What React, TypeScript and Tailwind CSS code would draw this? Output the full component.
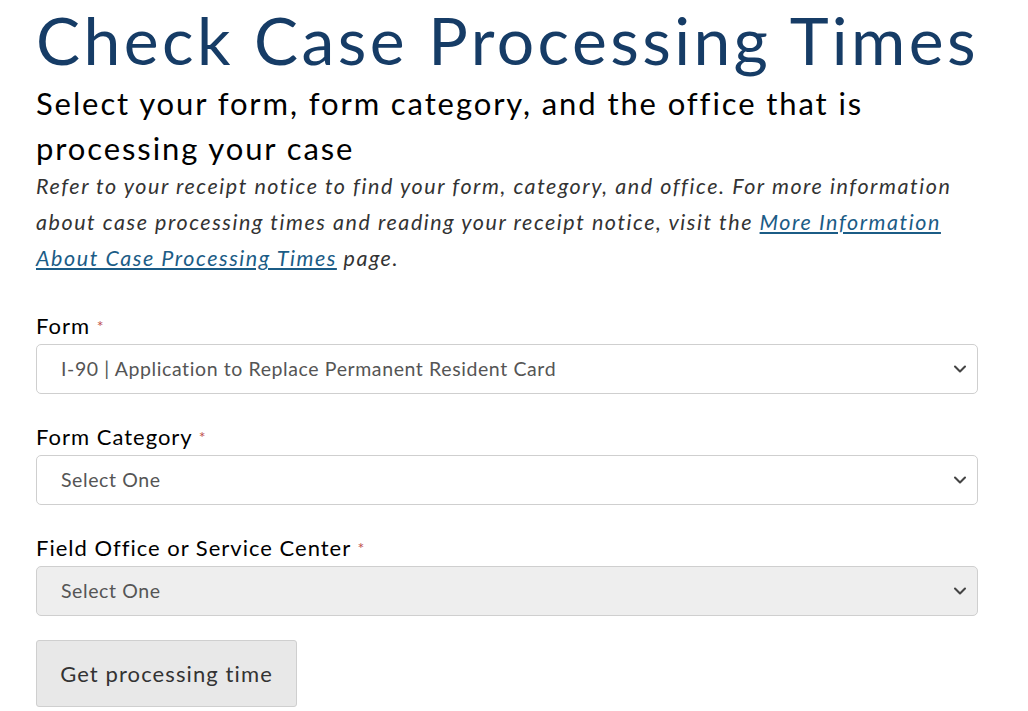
import { ChevronDown } from 'lucide-react';

const font = { fontFamily: 'Lato, "Open Sans", Arial, sans-serif' };

function Field({
  label,
  value,
  disabled = false,
}: {
  label: string;
  value: string;
  disabled?: boolean;
}) {
  return (
    <div className="mb-[29px]">
      <label className="block text-[22px] leading-[28px] tracking-[1px] text-black mb-[4px]">
        {label} <span className="text-[#c0504d] text-[16px] align-top">*</span>
      </label>
      <div
        className={`flex items-center justify-between h-[50px] rounded-[5px] border border-[#cfcfcf] pl-[24px] pr-[7px] ${
          disabled ? 'bg-[#eeeeee]' : 'bg-white'
        }`}
      >
        <span className="text-[19.5px] tracking-[0.6px] text-[#555]">{value}</span>
        <ChevronDown className="w-[20px] h-[20px] text-[#444]" strokeWidth={2.5} />
      </div>
    </div>
  );
}

export default function App() {
  return (
    <div className="bg-white min-h-[711px] pl-[36px] pr-[50px]" style={font}>
      <div className="w-[942px]">
        <h1 className="text-[66px] leading-[80px] tracking-[3.4px] text-[#163c66] whitespace-nowrap">
          Check Case Processing Times
        </h1>
        <h2 className="text-[31px] leading-[45px] tracking-[1.9px] text-black mt-[1px]">
          Select your form, form category, and the office that is
          <br />
          processing your case
        </h2>
        <p className="italic text-[21.5px] leading-[36px] tracking-[1.55px] text-[#333] mt-[-3px] mb-[36px] whitespace-nowrap">
          Refer to your receipt notice to find your form, category, and office. For more information
          <br />
          about case processing times and reading your receipt notice, visit the{' '}
          <a href="#" className="underline text-[#1b5c86]">
            More Information
            <br />
            About Case Processing Times
          </a>{' '}
          page.
        </p>

        <Field label="Form" value="I-90 | Application to Replace Permanent Resident Card" />
        <Field label="Form Category" value="Select One" />
        <Field label="Field Office or Service Center" value="Select One" disabled />

        <button className="mt-[-5px] h-[67px] w-[261px] rounded-[3px] border border-[#cfcfcf] bg-[#e8e8e8] text-[22px] tracking-[1.1px] text-[#333]">
          Get processing time
        </button>
      </div>
    </div>
  );
}
